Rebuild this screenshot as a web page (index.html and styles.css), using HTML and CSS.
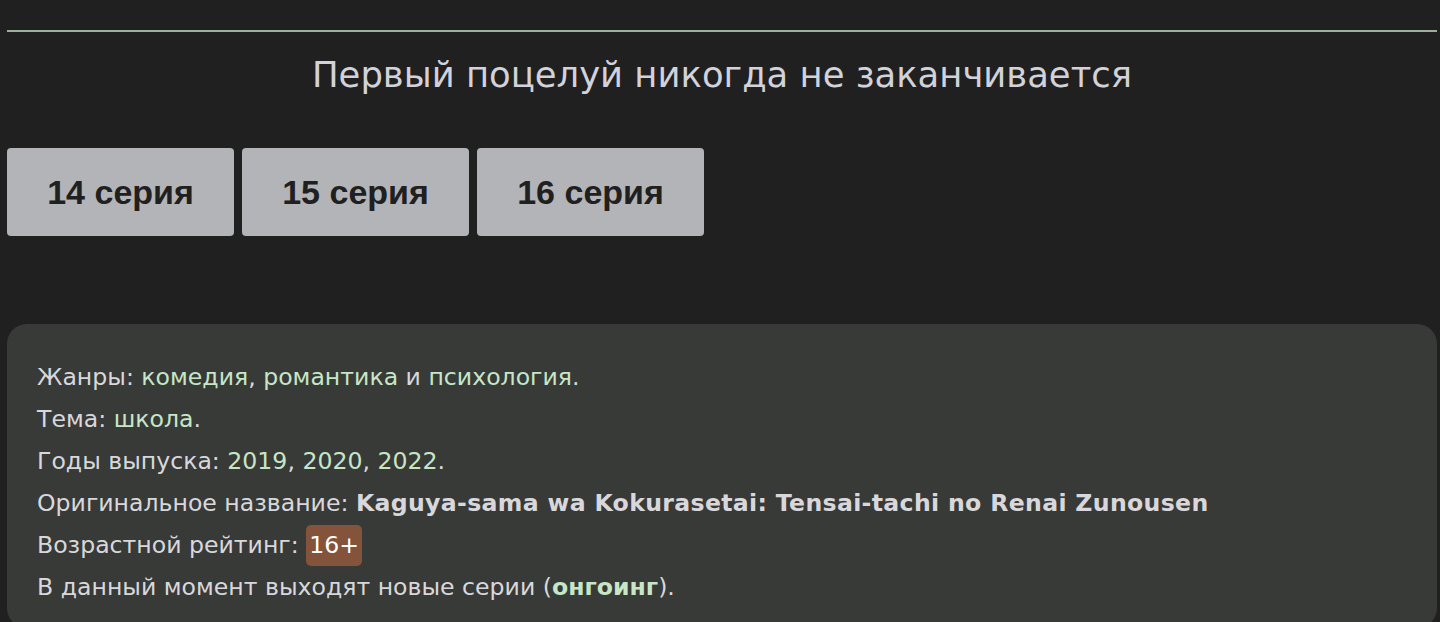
FILE: index.html
```html
<!DOCTYPE html>
<html lang="ru">
<head>
<meta charset="utf-8">
<link rel="stylesheet" href="styles.css">
</head>
<body>
<div class="page">
  <hr class="rule">
  <h1 class="title">Первый поцелуй никогда не заканчивается</h1>
  <div class="episodes">
    <a class="ep">14 серия</a>
    <a class="ep">15 серия</a>
    <a class="ep">16 серия</a>
  </div>
  <div class="info">
    <p>Жанры: <a class="lnk">комедия</a>, <a class="lnk">романтика</a> и <a class="lnk">психология</a>.</p>
    <p>Тема: <a class="lnk">школа</a>.</p>
    <p>Годы выпуска: <a class="lnk">2019</a>, <a class="lnk">2020</a>, <a class="lnk">2022</a>.</p>
    <p>Оригинальное название: <b class="orig">Kaguya-sama wa Kokurasetai: Tensai-tachi no Renai Zunousen</b></p>
    <p>Возрастной рейтинг: <span class="badge">16+</span></p>
    <p>В данный момент выходят новые серии (<b class="ongoing">онгоинг</b>).</p>
  </div>
</div>
</body>
</html>
```
FILE: styles.css
```css
html, body {
  margin: 0;
  padding: 0;
  background: #202020;
}
.page {
  padding: 0 3px 0 7px;
  font-family: "DejaVu Sans", Verdana, sans-serif;
}
.rule {
  margin: 30px 0 0 0;
  border: none;
  height: 2px;
  background: #9cb19c;
}
.title {
  margin: 20px 0 0 0;
  text-align: center;
  font-weight: normal;
  font-size: 35.4px;
  line-height: 46px;
  color: #d2d2da;
}
.episodes {
  display: flex;
  gap: 8px;
  margin-top: 50px;
}
.ep {
  width: 227px;
  height: 88px;
  display: flex;
  align-items: center;
  justify-content: center;
  background: #b3b4b8;
  border-radius: 4px;
  font-family: "Liberation Sans", Arial, sans-serif;
  font-weight: bold;
  font-size: 34px;
  color: #202020;
}
.info {
  margin-top: 88px;
  background: #383a37;
  border-radius: 20px;
  padding: 32px 30px 20px;
  color: #d8d8dc;
  font-size: 23.6px;
}
.info p {
  margin: 0;
  line-height: 42px;
}
.lnk {
  color: #c6e6c6;
}
.orig {
  color: #d8d8dc;
  letter-spacing: 0.33px;
}
.ongoing {
  color: #c6e6c6;
}
.badge {
  display: inline-block;
  background: #83533b;
  color: #ffffff;
  border-radius: 5px;
  padding: 0 3px;
  line-height: 41px;
}
```
